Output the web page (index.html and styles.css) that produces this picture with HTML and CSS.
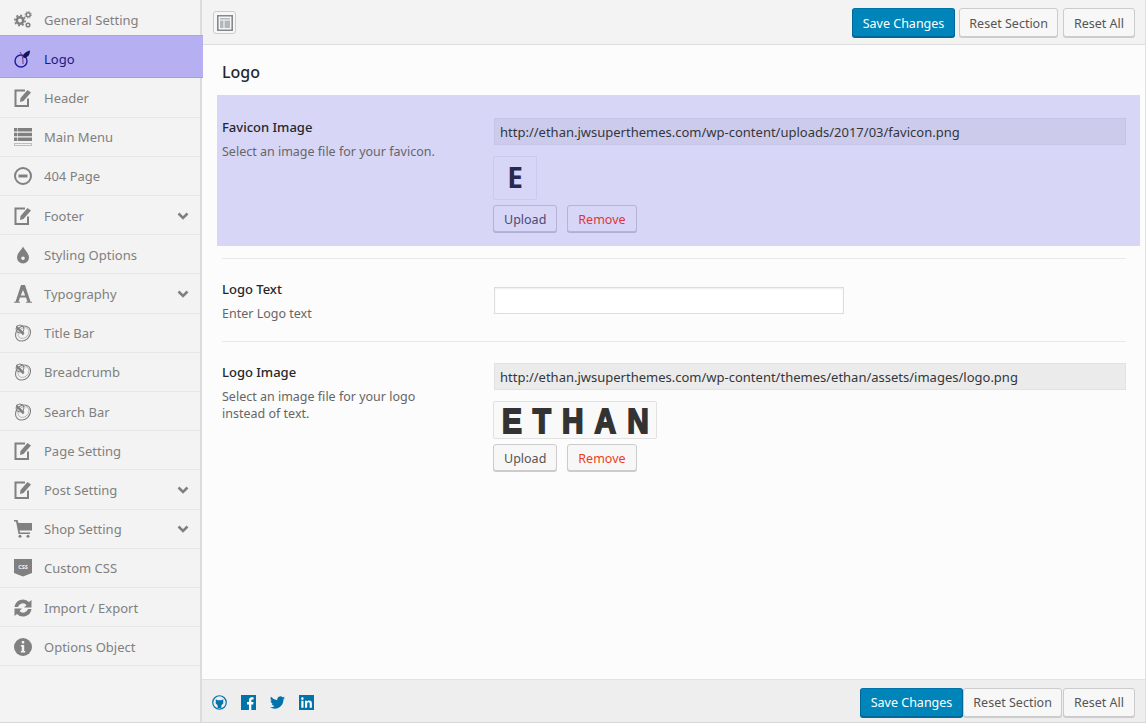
FILE: index.html
```html
<!DOCTYPE html>
<html lang="en">

<head>
    <meta charset="UTF-8">
    <title>Theme Options</title>
    <link rel="stylesheet" href="styles.css">
</head>

<body>

    <svg class="defs" width="0" height="0">
        <symbol id="i-edit" viewBox="0 0 18 18">
            <path d="M11 1.500H1.500v15.500h12.500v-7.500" fill="none" stroke="currentColor" stroke-width="2"/>
            <path d="M13 0l5 3.500-8 9.500-5 1.500 .5-5z" fill="#f3f3f3"/>
            <path d="M13.500 1l3.500 2.500-7.500 8.500-3.500 1 .5-4z" fill="currentColor"/>
        </symbol>
        <symbol id="i-target" viewBox="0 0 18 18">
            <ellipse cx="9" cy="9.500" rx="8.200" ry="6.800" transform="rotate(-45 9 9.500)" fill="none" stroke="currentColor" stroke-width="1.100"/>
            <ellipse cx="9.500" cy="9" rx="6" ry="4.800" transform="rotate(-45 9.500 9)" fill="none" stroke="currentColor" stroke-width=".7" opacity=".7"/>
            <circle cx="6" cy="5" r="4" fill="none" stroke="currentColor" stroke-width="1"/>
            <path d="M2.500 1.500l8 7.500-1.500 2.500-7-7.500z" fill="currentColor"/>
        </symbol>
        <symbol id="i-chev" viewBox="0 0 12 8">
            <path d="M1.500 1.500L6 6l4.500-4.500" fill="none" stroke="currentColor" stroke-width="2.600"/>
        </symbol>
    </svg>

    <div class="panel">
        <aside class="sidebar">
            <ul class="menu">
                <li class="menu-item">
                    <svg class="icon" viewBox="0 0 18 18"><circle cx="6" cy="9.500" r="3.200" fill="none" stroke="currentColor" stroke-width="2.600"/><circle cx="6" cy="9.500" r="5.200" fill="none" stroke="currentColor" stroke-width="1.600" stroke-dasharray="2 2"/><circle cx="14.200" cy="3.800" r="2" fill="none" stroke="currentColor" stroke-width="1.500"/><circle cx="14.200" cy="3.800" r="3.200" fill="none" stroke="currentColor" stroke-width="1" stroke-dasharray="1.200 1.300"/><circle cx="14" cy="14" r="1.800" fill="none" stroke="currentColor" stroke-width="1.500"/></svg>
                    General Setting
                </li>
                <li class="menu-item active">
                    <svg class="icon" viewBox="0 0 18 18"><circle cx="7" cy="11" r="6" fill="none" stroke="#1d1d9c" stroke-width="1.400"/><path d="M9 14c0-4 0-8-3-12" fill="none" stroke="#7a2d6e" stroke-width="1"/><path d="M9 7c0-3 2-5 7-6.500 0 3.500-1.500 7-6 7.500z" fill="#14145c"/></svg>
                    Logo
                </li>
                <li class="menu-item"><svg class="icon"><use href="#i-edit"/></svg>Header</li>
                <li class="menu-item">
                    <svg class="icon" viewBox="0 0 18 18"><path d="M0 0h18v3.500H0zM0 4.700h18v3.500H0zM0 9.400h18v3.500H0z" fill="currentColor"/><path d="M.5 15.500h17v2H.5z" fill="none" stroke="currentColor" stroke-width=".8" opacity=".6"/><path d="M3.500 0v13" stroke="#f3f3f3" stroke-width=".6"/></svg>
                    Main Menu
                </li>
                <li class="menu-item">
                    <svg class="icon" viewBox="0 0 18 18"><circle cx="9" cy="9" r="8" fill="none" stroke="currentColor" stroke-width="2"/><path d="M4.500 7.500h9v3h-9z" fill="currentColor"/></svg>
                    404 Page
                </li>
                <li class="menu-item"><svg class="icon"><use href="#i-edit"/></svg>Footer<svg class="chev"><use href="#i-chev"/></svg></li>
                <li class="menu-item">
                    <svg class="icon" viewBox="0 0 18 18"><path fill-rule="evenodd" d="M9 .5c1 3 6 6.500 6 11a6 6 0 0 1-12 0c0-4.500 5-8 6-11zM9 10.500a1.800 1.800 0 1 0 0 3.600 1.800 1.800 0 0 0 0-3.600z" fill="currentColor"/></svg>
                    Styling Options
                </li>
                <li class="menu-item">
                    <svg class="icon" viewBox="0 0 18 18"><path fill-rule="evenodd" d="M7 0h4l5.500 16.700H18v1H12v-1h1.500L12 12.500H6l-1.500 4.200H6v1H0v-1h1.500zM9 5l-2.200 5.500h4.400z" fill="currentColor"/></svg>
                    Typography<svg class="chev"><use href="#i-chev"/></svg>
                </li>
                <li class="menu-item"><svg class="icon"><use href="#i-target"/></svg>Title Bar</li>
                <li class="menu-item"><svg class="icon"><use href="#i-target"/></svg>Breadcrumb</li>
                <li class="menu-item"><svg class="icon"><use href="#i-target"/></svg>Search Bar</li>
                <li class="menu-item"><svg class="icon"><use href="#i-edit"/></svg>Page Setting</li>
                <li class="menu-item"><svg class="icon"><use href="#i-edit"/></svg>Post Setting<svg class="chev"><use href="#i-chev"/></svg></li>
                <li class="menu-item">
                    <svg class="icon" viewBox="0 0 18 18"><path d="M0 0h3.500l1 3H18v7.500H5.500l.5 2H16V14H4.500L2 1.500H0z" fill="currentColor"/><circle cx="6" cy="16.300" r="1.500" fill="currentColor"/><circle cx="14" cy="16.300" r="1.500" fill="currentColor"/></svg>
                    Shop Setting<svg class="chev"><use href="#i-chev"/></svg>
                </li>
                <li class="menu-item">
                    <svg class="icon" viewBox="0 0 18 18"><path d="M0 0h18v14l-9 3.500L0 14z" fill="currentColor"/><text class="css-mark" x="9" y="10" text-anchor="middle">CSS</text></svg>
                    Custom CSS
                </li>
                <li class="menu-item">
                    <svg class="icon" viewBox="0 0 18 18"><path d="M.5 8A8.500 8.500 0 0 1 15 3l2.500-2v7.500H10L12.500 6A5 5 0 0 0 4 8z" fill="currentColor"/><path d="M17.500 10A8.500 8.500 0 0 1 3 15L.5 17V9.500H8L5.500 12A5 5 0 0 0 14 10z" fill="currentColor"/></svg>
                    Import / Export
                </li>
                <li class="menu-item">
                    <svg class="icon" viewBox="0 0 18 18"><circle cx="9" cy="9" r="9" fill="currentColor"/><path d="M7.800 3h2.400v2.400H7.800zM6.800 7h3.400v6h1v1.500H6.800V13h1V8.500h-1z" fill="#f3f3f3"/></svg>
                    Options Object
                </li>
            </ul>
        </aside>

        <main class="main">
            <header class="bar bar-top">
                <button class="expand" type="button">
                    <svg width="16" height="16" viewBox="0 0 16 16"><path d="M.8.8h14.400v14.400H.8z" fill="none" stroke="#84888c" stroke-width="1.600"/><path d="M3 3h10v1.500H3zM3 5.500h3.500V13H3zM7.500 5.500H13V13H7.500z" fill="#b4b7ba"/></svg>
                </button>
                <div class="actions">
                    <button class="btn btn-primary" type="button">Save Changes</button>
                    <button class="btn btn-section" type="button">Reset Section</button>
                    <button class="btn btn-all" type="button">Reset All</button>
                </div>
            </header>

            <section class="content">
                <h2>Logo</h2>

                <div class="field field-fav">
                    <div class="field-label">
                        <h4>Favicon Image</h4>
                        <p>Select an image file for your favicon.</p>
                    </div>
                    <div class="field-control">
                        <input class="url" type="text" readonly value="http://ethan.jwsuperthemes.com/wp-content/uploads/2017/03/favicon.png">
                        <div class="thumb thumb-fav"><span class="fav-letter">E</span></div>
                        <div class="upload-row">
                            <button class="btn" type="button">Upload</button>
                            <button class="btn btn-remove" type="button">Remove</button>
                        </div>
                    </div>
                </div>

                <div class="field field-text">
                    <div class="field-label">
                        <h4>Logo Text</h4>
                        <p>Enter Logo text</p>
                    </div>
                    <div class="field-control">
                        <input class="text" type="text">
                    </div>
                </div>

                <div class="field field-image">
                    <div class="field-label">
                        <h4>Logo Image</h4>
                        <p>Select an image file for your logo instead of text.</p>
                    </div>
                    <div class="field-control">
                        <input class="url" type="text" readonly value="http://ethan.jwsuperthemes.com/wp-content/themes/ethan/assets/images/logo.png">
                        <div class="thumb thumb-logo"><span class="logo-word">ETHAN</span></div>
                        <div class="upload-row">
                            <button class="btn" type="button">Upload</button>
                            <button class="btn btn-remove" type="button">Remove</button>
                        </div>
                    </div>
                </div>
            </section>

            <footer class="bar bar-bottom">
                <div class="social">
                    <svg width="15" height="15" viewBox="0 0 16 16"><circle cx="8" cy="8" r="7.200" fill="none" stroke="#0073aa" stroke-width="1.300"/><path d="M4 4.500l2 1h4l2-1v4.500l-2 2v3H6v-3L4 9z" fill="#0073aa"/></svg>
                    <svg width="15" height="15" viewBox="0 0 16 16"><path d="M0 0h16v16H0z" fill="#0073aa"/><path d="M11 16v-6h2l.3-2.500H11V6c0-.8.300-1.200 1.200-1.200h1.200V2.600C13 2.500 12.300 2.500 11.500 2.500 9.700 2.500 8.500 3.600 8.500 5.600v1.900h-2V10h2v6z" fill="#fff"/></svg>
                    <svg width="15" height="15" viewBox="0 0 16 14"><path d="M16 2a6 6 0 0 1-1.900.5A3.300 3.300 0 0 0 15.500.7a6.500 6.500 0 0 1-2.100.8 3.300 3.300 0 0 0-5.600 3A9.300 9.300 0 0 1 1.100.9a3.300 3.300 0 0 0 1 4.400 3.300 3.300 0 0 1-1.500-.4c0 1.600 1.100 3 2.600 3.300a3.300 3.300 0 0 1-1.500.1 3.300 3.300 0 0 0 3.100 2.300A6.600 6.600 0 0 1 0 12a9.300 9.300 0 0 0 14.300-8.300A6.500 6.500 0 0 0 16 2z" fill="#0073aa"/></svg>
                    <svg width="15" height="15" viewBox="0 0 16 16"><path d="M0 0h16v16H0z" fill="#0073aa"/><path d="M2.500 6h2.300v7.500H2.500zM3.600 2.500a1.300 1.300 0 1 1 0 2.700 1.300 1.300 0 0 1 0-2.700zM6.400 6h2.200v1c.4-.7 1.200-1.200 2.300-1.200 2.100 0 2.800 1.300 2.800 3.300v4.400h-2.300V9.600c0-1-.2-1.800-1.200-1.800s-1.500.7-1.500 1.800v3.900H6.400z" fill="#fff"/></svg>
                </div>
                <div class="actions actions-tight">
                    <button class="btn btn-primary" type="button">Save Changes</button>
                    <button class="btn btn-section" type="button">Reset Section</button>
                    <button class="btn btn-all" type="button">Reset All</button>
                </div>
            </footer>
        </main>
    </div>

</body>

</html>
```

FILE: styles.css
```css
* {
    box-sizing: border-box;
}

body {
    font-family: 'Noto Sans', 'Open Sans', sans-serif;
    font-size: 13px;
    color: #444;
    background-color: #fff;
    margin: 0;
    padding: 0;
    height: 724px;
    overflow: hidden;
}

.defs {
    display: block;
    height: 0;
}

.panel {
    display: flex;
    height: 723px;
    border-bottom: 1px solid #d8d8d8;
}

.sidebar {
    width: 202px;
    flex-shrink: 0;
    background: #f3f3f3;
    border-right: 2px solid #dcdcdc;
}

.menu {
    list-style: none;
    margin: 0;
    padding: 0;
}

.menu-item {
    display: flex;
    align-items: center;
    height: 39.21px;
    padding: 1px 0 0 14px;
    color: #808080;
    border-bottom: 1px solid #e7e7e7;
    white-space: nowrap;
}

.menu-item .icon {
    width: 18px;
    height: 18px;
    margin-right: 12px;
    flex-shrink: 0;
}

.menu-item .chev {
    width: 12px;
    height: 8px;
    margin-left: auto;
    margin-right: 11px;
}

.css-mark {
    font-size: 5.5px;
    font-weight: 700;
    fill: #f3f3f3;
}

.menu-item.active {
    height: 43.21px;
    margin-top: -4px;
    margin-right: -3px;
    padding-top: 4px;
    position: relative;
    color: #18187f;
    background: #b6b0f3;
    border-top: 1px solid #a9a3ee;
    border-bottom: 1px solid #a29cec;
}

.main {
    flex: 1;
    display: flex;
    flex-direction: column;
    min-width: 0;
    background: #fcfcfc;
    border-right: 1px solid #e0e0e0;
}

.bar {
    display: flex;
    justify-content: space-between;
    align-items: center;
    background: #f3f3f3;
}

.bar-top {
    height: 45px;
    padding: 1px 10px 0 11px;
    border-bottom: 1px solid #dedede;
}

.bar-bottom {
    height: 43px;
    padding: 2px 10px 0 10px;
    background: #eee;
    border-top: 1px solid #e2e2e2;
}

.actions {
    display: flex;
    gap: 4px;
}

.actions-tight {
    gap: 0;
}

.social {
    display: flex;
    align-items: center;
    gap: 14px;
}

.btn {
    height: 29px;
    padding: 1px 10px 0 10px;
    font-family: inherit;
    font-size: 12.5px;
    color: #555;
    background: #f7f7f7;
    border: 1px solid #ccc;
    border-radius: 3px;
    box-shadow: 0 1px 0 #ccc;
    white-space: nowrap;
}

.btn-primary {
    color: #fff;
    background: #0085ba;
    border-color: #0073aa #006799 #006799;
    box-shadow: 0 1px 0 #006799;
}

.btn-section {
    padding: 1px 9px 0 9px;
}

.btn-all {
    margin-left: 1px;
}

.btn-remove {
    color: #f03c1e;
}

.expand {
    display: flex;
    align-items: center;
    justify-content: center;
    width: 23px;
    height: 23px;
    padding: 0;
    background: #f7f7f7;
    border: 1px solid #ccc;
    border-radius: 3px;
}

.content {
    flex: 1;
    padding: 0 19px 0 20px;
}

h2 {
    margin: 16px 0 12px 0;
    padding: 0;
    font-size: 16px;
    font-weight: 500;
    line-height: 22px;
    color: #23282d;
}

.field {
    display: flex;
    border-bottom: 1px solid #e8e8e8;
}

.field-label {
    width: 271px;
    flex-shrink: 0;
}

.field-label h4 {
    margin: 0 0 7px 0;
    font-size: 13px;
    font-weight: 500;
    line-height: 18px;
    color: #23282d;
}

.field-label p {
    margin: 0;
    width: 215px;
    font-size: 12.5px;
    line-height: 17px;
    color: #666;
}

.field-control {
    flex: 1;
    min-width: 0;
}

.field-fav {
    position: relative;
    padding: 23px 14px 14px 5px;
    margin: 0 -14px 0 -5px;
    background: #d8d6f7;
    border-bottom: 0;
}

.field-fav::after {
    content: "";
    position: absolute;
    left: 5px;
    right: 14px;
    bottom: -13px;
    border-bottom: 1px solid #e8e8e8;
}

.field-text {
    margin-top: 13px;
    padding: 21px 0 19px 0;
}

.field-text .field-control {
    padding-top: 7px;
}

.field-image {
    border-bottom: 0;
    padding-top: 21px;
}

.url,
.text {
    display: block;
    margin-left: 1px;
    font-family: inherit;
    font-size: 13px;
    color: #32373c;
    padding: 0 5px;
    outline: none;
}

.url {
    width: 632px;
    height: 27px;
    background: #ebebeb;
    border: 1px solid #e2e2e2;
}

.field-fav .url {
    background: #cdcbec;
    border-color: #c6c4e8;
}

.text {
    width: 350px;
    height: 27px;
    background: #fff;
    border: 1px solid #ddd;
    box-shadow: inset 0 1px 2px rgba(0, 0, 0, 0.07);
}

.thumb {
    display: flex;
    align-items: center;
    justify-content: center;
    margin-top: 11px;
    border: 1px solid #e2e2e2;
    border-radius: 2px;
}

.thumb-fav {
    width: 44px;
    height: 44px;
    border-color: #cbc9ee;
}

.fav-letter {
    margin-top: -2px;
    font-size: 28px;
    font-weight: 700;
    color: #2a2850;
}

.thumb-logo {
    width: 164px;
    height: 38px;
    background: #f9f9f9;
}

.logo-word {
    display: inline-block;
    flex-shrink: 0;
    padding-left: 13px;
    font-family: 'Liberation Sans', sans-serif;
    font-size: 35px;
    font-weight: 700;
    line-height: 1;
    letter-spacing: 13px;
    color: #333;
    -webkit-text-stroke: 2px #333;
    transform: scaleX(0.85);
}

.upload-row {
    display: flex;
    gap: 10px;
    margin-top: 5px;
}

.upload-row .btn {
    height: 27px;
    padding-top: 2px;
}

.field-fav .btn {
    background: #d8d6f7;
    border-color: #b5b3d6;
    box-shadow: 0 1px 0 #b0aed4;
    color: #4b4a70;
}

.field-fav .btn-remove {
    color: #d9383a;
}
```
